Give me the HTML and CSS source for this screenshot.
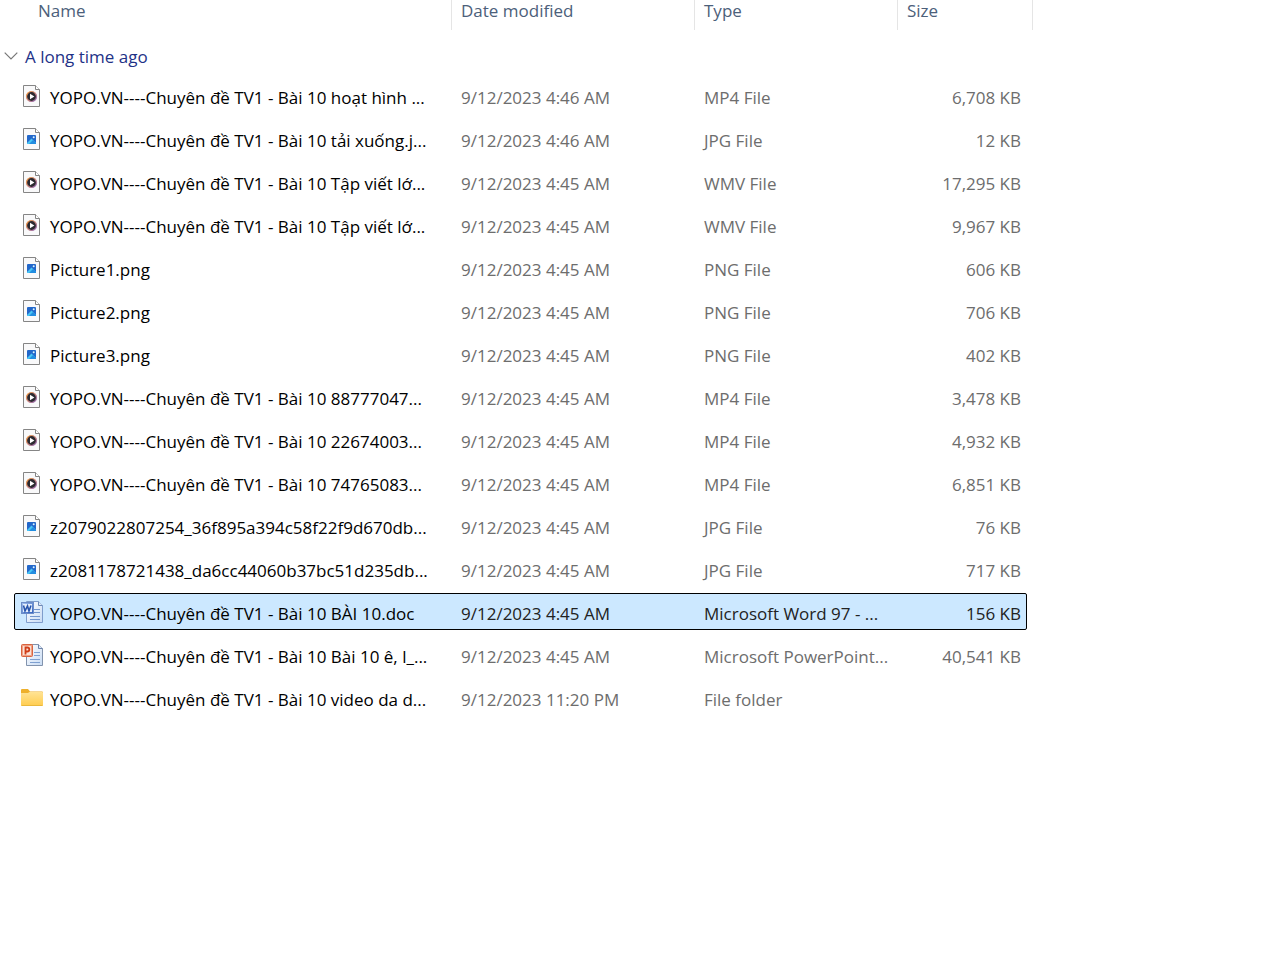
FILE: index.html
```html
<!DOCTYPE html>
<html lang="vi">
<head>
<meta charset="utf-8">
<title>Files</title>
<link rel="stylesheet" href="styles.css">
</head>
<body>
<svg class="sprites" aria-hidden="true">
  <defs>
    <linearGradient id="ring" x1="0" y1="0" x2="1" y2="1"><stop offset="0" stop-color="#f59a3c"/><stop offset=".5" stop-color="#d08a80"/><stop offset="1" stop-color="#8a62b4"/></linearGradient>
    <linearGradient id="blue" x1="0" y1="0" x2="1" y2="1"><stop offset="0" stop-color="#a9c6f3"/><stop offset="1" stop-color="#2e5dba"/></linearGradient>
    <linearGradient id="gold" x1="0" y1="0" x2="0" y2="1"><stop offset="0" stop-color="#ffe394"/><stop offset="1" stop-color="#ffcc4e"/></linearGradient>
    <linearGradient id="doc" x1="0" y1="0" x2="1" y2="1"><stop offset="0" stop-color="#fff"/><stop offset="1" stop-color="#c9dcf4"/></linearGradient>
  </defs>
  <symbol id="page" viewBox="0 0 24 24">
    <path d="M3.5 1.5h12l4 4v17h-16z" fill="#f9f9fa" stroke="#858585"/>
    <path d="M15.5 1.5v4h4" fill="#fff" stroke="#858585"/>
  </symbol>
  <symbol id="video" viewBox="0 0 24 24">
    <use href="#page"/>
    <circle cx="11.5" cy="12.5" r="5" fill="#2b2930" stroke="url(#ring)" stroke-width="1.2"/>
    <path d="M10 9.7v5.6l4.4-2.8z" fill="#fff"/>
  </symbol>
  <symbol id="image" viewBox="0 0 24 24">
    <use href="#page"/>
    <rect x="7" y="8" width="9" height="9" rx="1" fill="#2267ca"/>
    <path d="M7 16l4.5-4.5L16 16v1H7z" fill="#48c5f5"/>
    <path d="M9 17l4-4 3 3v1z" fill="#218de0"/>
    <circle cx="13.7" cy="10.2" r="1" fill="#d8f3ff"/>
  </symbol>
  <symbol id="word" viewBox="0 0 24 24">
    <path d="M6.5 1.5h12l4 4v17h-16z" fill="url(#doc)" stroke="#7f9dcc"/>
    <path d="M18.5 1.5v4h4" fill="#dce8f8" stroke="#6d8ab8"/>
    <path d="M14 9.5h6M14 12.5h6M10 16.5h10M10 19.5h10" stroke="#7295cd"/>
    <rect x="1.5" y="2.5" width="12" height="11" fill="url(#blue)" stroke="#6c8cc8"/>
    <rect x="3" y="4" width="9" height="8" fill="#e7effb"/>
    <path d="M3.5 5.5L5 11l2.5-5L9 11l2-5.5" fill="none" stroke="#2855ad" stroke-width="1.6"/>
  </symbol>
  <symbol id="slides" viewBox="0 0 24 24">
    <path d="M6.5 1.5h12l4 4v17h-16z" fill="url(#doc)" stroke="#8293ad"/>
    <path d="M18.5 1.5v4h4" fill="#dce8f8" stroke="#6d83a8"/>
    <path d="M14 9.5h6M14 12.5h6M10 16.5h10M10 19.5h10" stroke="#7fa0d0"/>
    <rect x="1.5" y="1.5" width="11" height="12" rx="1" fill="#f0a184" stroke="#d9633f"/>
    <rect x="3" y="3" width="8" height="9" fill="#fbe1d5"/>
    <path d="M5.5 11.5V4.5h1.8q2 0 2 2T7.3 8.500H5.500" fill="none" stroke="#cf3d18" stroke-width="1.8"/>
  </symbol>
  <symbol id="folder" viewBox="0 0 24 24">
    <path d="M1 4q0-1 1-1h6l2 2.5h12q1 0 1 1V11H1z" fill="#eeb02c"/>
    <path d="M1 7h7l1.5-1H22q1 0 1 1v12q0 1-1 1H2q-1 0-1-1z" fill="url(#gold)"/>
    <path d="M1.5 19.5h21" stroke="#eab83c"/>
  </symbol>
</svg>
<main>
<table class="files">
  <thead>
    <tr class="head"><th scope="col">Name</th><th scope="col">Date modified</th><th scope="col">Type</th><th scope="col">Size</th></tr>
  </thead>
  <tbody>
    <tr class="group"><th colspan="4" scope="rowgroup"><button class="toggle" type="button" aria-expanded="true"><svg class="chevron" viewBox="0 0 14 8" aria-hidden="true"><path d="M.7.7L7 7l6.3-6.3"/></svg>A long time ago</button></th></tr>
    <tr class="file"><td class="name"><svg class="icon"><use href="#video"/></svg>YOPO.VN----Chuyên đề TV1 - Bài 10 hoạt hình ...</td><td>9/12/2023 4:46 AM</td><td>MP4 File</td><td class="size">6,708 KB</td></tr>
    <tr class="file"><td class="name"><svg class="icon"><use href="#image"/></svg>YOPO.VN----Chuyên đề TV1 - Bài 10 tải xuống.j...</td><td>9/12/2023 4:46 AM</td><td>JPG File</td><td class="size">12 KB</td></tr>
    <tr class="file"><td class="name"><svg class="icon"><use href="#video"/></svg>YOPO.VN----Chuyên đề TV1 - Bài 10 Tập viết lớ...</td><td>9/12/2023 4:45 AM</td><td>WMV File</td><td class="size">17,295 KB</td></tr>
    <tr class="file"><td class="name"><svg class="icon"><use href="#video"/></svg>YOPO.VN----Chuyên đề TV1 - Bài 10 Tập viết lớ...</td><td>9/12/2023 4:45 AM</td><td>WMV File</td><td class="size">9,967 KB</td></tr>
    <tr class="file"><td class="name"><svg class="icon"><use href="#image"/></svg>Picture1.png</td><td>9/12/2023 4:45 AM</td><td>PNG File</td><td class="size">606 KB</td></tr>
    <tr class="file"><td class="name"><svg class="icon"><use href="#image"/></svg>Picture2.png</td><td>9/12/2023 4:45 AM</td><td>PNG File</td><td class="size">706 KB</td></tr>
    <tr class="file"><td class="name"><svg class="icon"><use href="#image"/></svg>Picture3.png</td><td>9/12/2023 4:45 AM</td><td>PNG File</td><td class="size">402 KB</td></tr>
    <tr class="file"><td class="name"><svg class="icon"><use href="#video"/></svg>YOPO.VN----Chuyên đề TV1 - Bài 10 88777047...</td><td>9/12/2023 4:45 AM</td><td>MP4 File</td><td class="size">3,478 KB</td></tr>
    <tr class="file"><td class="name"><svg class="icon"><use href="#video"/></svg>YOPO.VN----Chuyên đề TV1 - Bài 10 22674003...</td><td>9/12/2023 4:45 AM</td><td>MP4 File</td><td class="size">4,932 KB</td></tr>
    <tr class="file"><td class="name"><svg class="icon"><use href="#video"/></svg>YOPO.VN----Chuyên đề TV1 - Bài 10 74765083...</td><td>9/12/2023 4:45 AM</td><td>MP4 File</td><td class="size">6,851 KB</td></tr>
    <tr class="file"><td class="name"><svg class="icon"><use href="#image"/></svg>z2079022807254_36f895a394c58f22f9d670db...</td><td>9/12/2023 4:45 AM</td><td>JPG File</td><td class="size">76 KB</td></tr>
    <tr class="file"><td class="name"><svg class="icon"><use href="#image"/></svg>z2081178721438_da6cc44060b37bc51d235db...</td><td>9/12/2023 4:45 AM</td><td>JPG File</td><td class="size">717 KB</td></tr>
    <tr class="file selected" aria-selected="true"><td class="name"><svg class="icon"><use href="#word"/></svg>YOPO.VN----Chuyên đề TV1 - Bài 10 BÀI 10.doc</td><td>9/12/2023 4:45 AM</td><td>Microsoft Word 97 - ...</td><td class="size">156 KB</td></tr>
    <tr class="file"><td class="name"><svg class="icon"><use href="#slides"/></svg>YOPO.VN----Chuyên đề TV1 - Bài 10 Bài 10 ê, l_...</td><td>9/12/2023 4:45 AM</td><td>Microsoft PowerPoint...</td><td class="size">40,541 KB</td></tr>
    <tr class="file"><td class="name"><svg class="icon"><use href="#folder"/></svg>YOPO.VN----Chuyên đề TV1 - Bài 10 video da d...</td><td>9/12/2023 11:20 PM</td><td>File folder</td><td class="size"></td></tr>
  </tbody>
</table>
</main>
</body>
</html>
```
FILE: styles.css
```css
body {
  margin: 0;
  background: #fff;
  color: #6d6d6d;
  font-family: "Segoe UI", "Open Sans", "Noto Sans", sans-serif;
  font-size: 17px;
  line-height: 24px;
}

.sprites {
  position: absolute;
  width: 0;
  height: 0;
}

.files,
.files thead,
.files tbody {
  display: block;
}

.head,
.file {
  display: grid;
  align-items: center;
  white-space: nowrap;
}

.head {
  grid-template-columns: 452px 243px 203px 135px;
  color: #4c607a;
}

.head th {
  height: 30px;
  padding: 0 9px;
  border-right: 1px solid #e5e5e5;
  font-weight: inherit;
  line-height: 22px;
  text-align: left;
}

.head th:first-child {
  padding-left: 38px;
}

.group {
  display: block;
  padding: 15px 0 8px 4px;
}

.group th {
  display: block;
  padding: 0;
  font-weight: inherit;
  text-align: left;
}

.toggle {
  display: flex;
  align-items: center;
  gap: 7px;
  padding: 0;
  border: 0;
  background: none;
  color: #1e3287;
  font: inherit;
}

.chevron {
  width: 14px;
  height: 8px;
  margin-bottom: 2px;
  fill: none;
  stroke: #777;
  stroke-width: 1.2;
}

.file {
  grid-template-columns: 437px 243px 203px 128px;
  width: max-content;
  margin: 0 0 6px 14px;
  border: 1px solid transparent;
  border-radius: 2px;
}

.file td {
  padding: 8px 9px 3px;
}

.file .name {
  display: flex;
  align-items: center;
  gap: 6px;
  padding: 8px 0 3px 5px;
  color: #000;
}

.file .size {
  padding-right: 5px;
  text-align: right;
}

.icon {
  flex: none;
  width: 24px;
  height: 24px;
  margin: -2px 0 2px;
}

.selected {
  border-color: #000;
  background: #cce8ff;
  color: #222;
}
```
